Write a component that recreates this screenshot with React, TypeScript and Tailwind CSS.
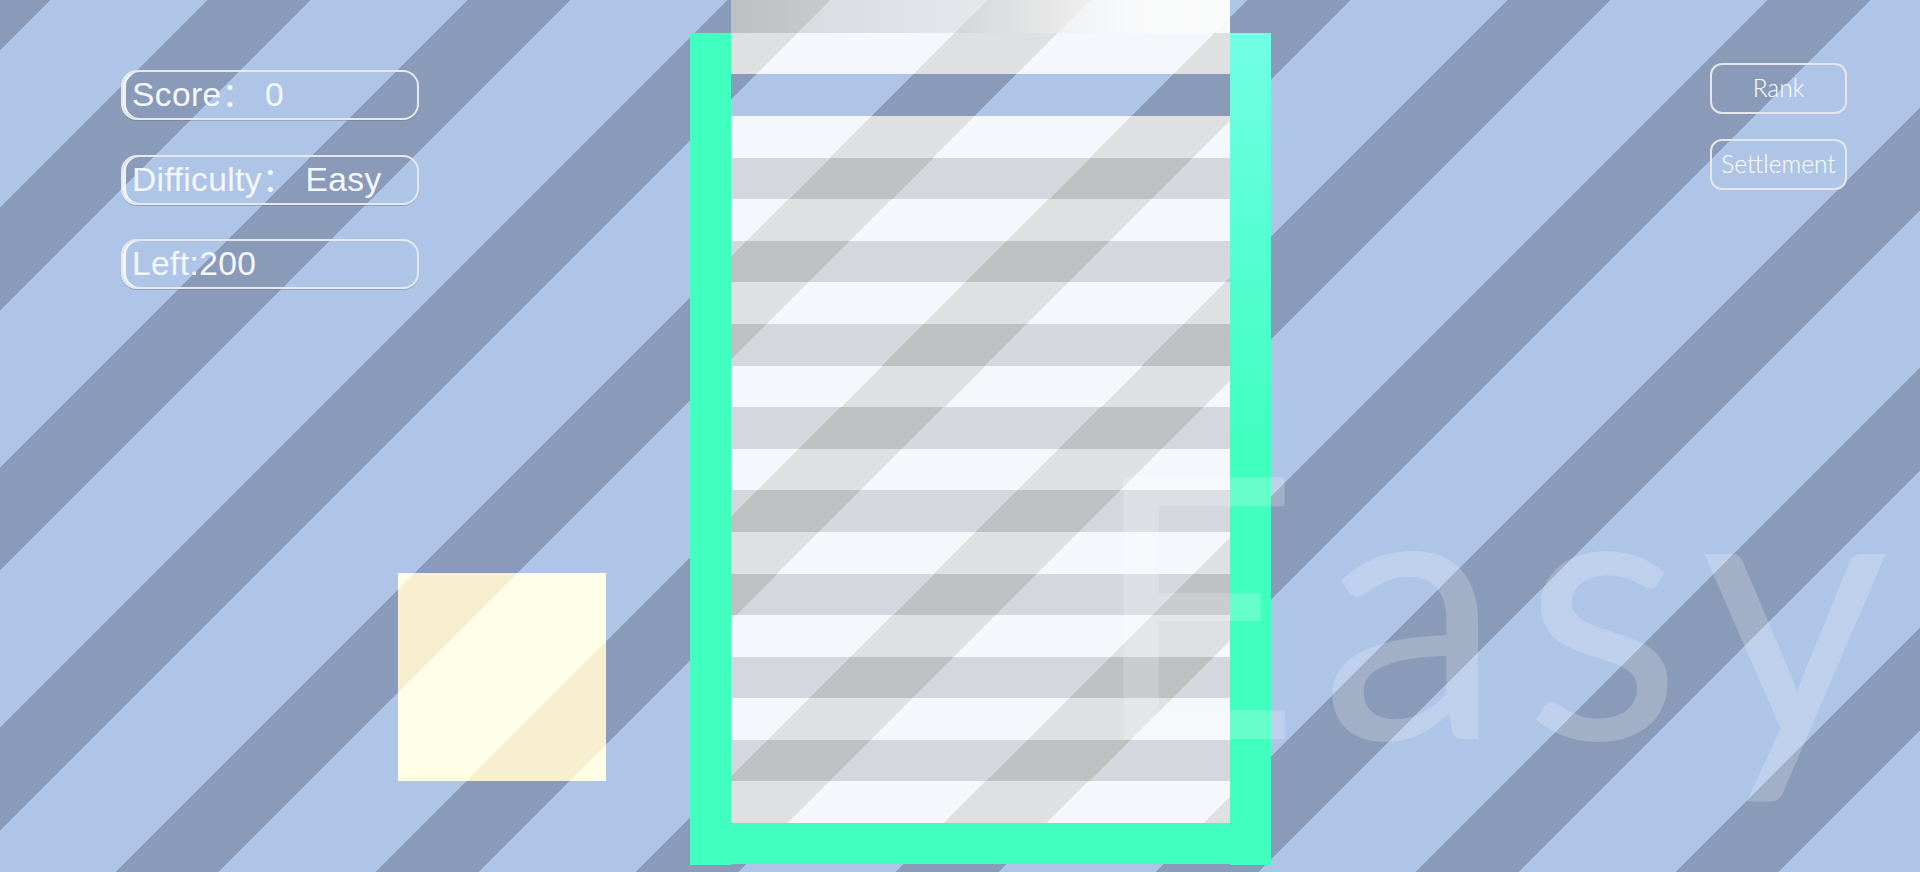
import React from "react";

// page stripes: 45deg, period 260px horizontally (183.8px across the stripe)
const PAGE_BG =
  "bg-[image:repeating-linear-gradient(135deg,#8a9bb9_0px,#8a9bb9_36px,#aec5e8_36px,#aec5e8_147px,#8a9bb9_147px,#8a9bb9_183.8px)]";
const WHITE_ROW =
  "bg-fixed bg-[image:repeating-linear-gradient(135deg,#dfe0e2_0px,#dfe0e2_36px,#f4f7fb_36px,#f4f7fb_147px,#dfe0e2_147px,#dfe0e2_183.8px)]";
const GRAY_ROW =
  "bg-fixed bg-[image:repeating-linear-gradient(135deg,#bfc0c2_0px,#bfc0c2_36px,#d4d8de_36px,#d4d8de_147px,#bfc0c2_147px,#bfc0c2_183.8px)]";
const PREVIEW =
  "bg-fixed bg-[image:repeating-linear-gradient(135deg,#f7efd0_0px,#f7efd0_36px,#fffee6_36px,#fffee6_147px,#f7efd0_147px,#f7efd0_183.8px)]";

const STATS = ["Score\uFF1A 0", "Difficulty\uFF1A Easy", "Left:200"];

// 20 rows of the well; row 2 has been cleared
const ROWS = Array.from({ length: 20 }, (_, i) => (i === 2 ? "empty" : i % 2 === 0 ? "gray" : "white"));

function StatBox({ text }: { text: string }) {
  return (
    <div className="flex h-[50px] w-[298px] items-center rounded-[16px] border-2 border-[#e6e8ec] pl-[9px] shadow-[inset_3px_0_0_rgba(255,255,255,0.85),0_1px_0_rgba(90,100,120,0.35)]">
      <span className="whitespace-pre font-['Liberation_Sans','Noto_Sans_CJK_SC',sans-serif] text-[33.5px] leading-none tracking-[0.4px] text-[#f4f7ff]">
        {text}
      </span>
    </div>
  );
}

function MenuButton({ label }: { label: string }) {
  return (
    <button className="flex h-[51px] w-[137px] items-center justify-center rounded-[12px] border-2 border-[#e4e6ea] font-['Lato',sans-serif] text-[24.5px] font-light text-white">
      {label}
    </button>
  );
}

export default function App() {
  return (
    <div className={`relative flex h-[872px] w-full overflow-hidden ${PAGE_BG}`}>
      {/* left: stats + next piece */}
      <div className="flex w-[690px] shrink-0 flex-col pl-[121px] pt-[70px]">
        <div className="flex flex-col gap-[34.5px]">
          {STATS.map((s) => (
            <StatBox key={s} text={s} />
          ))}
        </div>
        <div className={`ml-[277px] mt-[284px] h-[208px] w-[208px] ${PREVIEW}`} />
      </div>

      {/* the well */}
      <div className="mt-[33px] flex h-[831.5px] w-[581px] shrink-0">
        <div className="w-[41px] bg-[#40ffbf]" />
        <div className="-mt-[41.8px] flex w-[499px] flex-col">
          {ROWS.map((r, i) => (
            <div
              key={i}
              className={`relative h-[41.6px] ${r === "white" ? WHITE_ROW : r === "gray" ? GRAY_ROW : ""}`}
            >
              {i === 0 && (
                <div className="absolute inset-0 bg-[linear-gradient(90deg,rgba(255,255,255,0)_0%,rgba(255,255,255,0.35)_45%,rgba(255,255,255,0.85)_80%,rgba(255,255,255,0.9)_100%)]" />
              )}
            </div>
          ))}
          <div className="h-[41.3px] bg-[#40ffbf]" />
        </div>
        <div className="w-[41px] bg-[linear-gradient(180deg,#72ffe6_0%,#56ffd2_25%,#40ffbf_50%,#40ffbf_100%)]" />
      </div>

      {/* right: menu */}
      <div className="flex flex-1 flex-col items-end gap-[25px] pr-[73px] pt-[63px]">
        <MenuButton label="Rank" />
        <MenuButton label="Settlement" />
      </div>

      {/* difficulty watermark */}
      <div className="pointer-events-none absolute left-[1090px] top-[416px] font-['Lato',sans-serif] text-[365px] leading-none tracking-[0.06em] text-white/20">
        Easy
      </div>
    </div>
  );
}
